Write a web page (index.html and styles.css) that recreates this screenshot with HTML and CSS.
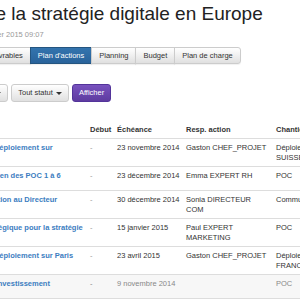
FILE: index.html
```html
<!DOCTYPE html>
<html>
<head>
<meta charset="utf-8" />
<title>Plan d'actions</title>
	<link rel="stylesheet" href="styles.css">
</head>

<body>
	<div class="page">
		<h1 class="titre">Pilotage de la stratégie digitale en Europe</h1>
		<div class="maj">Mis à jour le lundi 12 janvier 2015 09:07</div>

		<div class="onglets">
			<a class="onglet">Tableau de bord</a>
			<a class="onglet">Livrables</a>
			<a class="onglet actif">Plan d'actions</a>
			<a class="onglet">Planning</a>
			<a class="onglet">Budget</a>
			<a class="onglet">Plan de charge</a>
		</div>

		<form class="filtres">
			<button type="button" class="btn">Toutes les échéances <span class="caret"></span></button>
			<button type="button" class="btn">Tout statut <span class="caret"></span></button>
			<button type="submit" class="btn btn-violet">Afficher</button>
		</form>

		<table class="actions">
			<colgroup>
				<col class="c-ref" />
				<col class="c-action" />
				<col class="c-debut" />
				<col class="c-echeance" />
				<col class="c-resp" />
				<col class="c-chantier" />
				<col class="c-outils" />
			</colgroup>
			<thead>
				<tr>
					<th>N°</th>
					<th>Action</th>
					<th>Début</th>
					<th>Échéance</th>
					<th>Resp. action</th>
					<th>Chantier</th>
					<th></th>
				</tr>
			</thead>
			<tbody>
				<tr>
					<td>A-01</td>
					<td><a class="lien" href="#">Plan de déploiement sur</a></td>
					<td class="tiret">-</td>
					<td class="date">23 novembre 2014</td>
					<td>Gaston CHEF_PROJET</td>
					<td>Déploiement SUISSE</td>
					<td><button class="btn-mini">Modifier</button></td>
				</tr>
				<tr>
					<td>A-02</td>
					<td><a class="lien" href="#">Pré-examen des POC 1 à 6</a></td>
					<td class="tiret">-</td>
					<td class="date">23 décembre 2014</td>
					<td>Emma EXPERT RH</td>
					<td>POC</td>
					<td><button class="btn-mini">Modifier</button></td>
				</tr>
				<tr>
					<td>A-03</td>
					<td><a class="lien" href="#">Présentation au Directeur</a></td>
					<td class="tiret">-</td>
					<td class="date">30 décembre 2014</td>
					<td>Sonia DIRECTEUR COM</td>
					<td>Communication</td>
					<td><button class="btn-mini">Modifier</button></td>
				</tr>
				<tr>
					<td>A-04</td>
					<td><a class="lien" href="#">Axe stratégique pour la stratégie</a></td>
					<td class="tiret">-</td>
					<td class="date">15 janvier 2015</td>
					<td>Paul EXPERT MARKETING</td>
					<td>POC</td>
					<td><button class="btn-mini">Modifier</button></td>
				</tr>
				<tr>
					<td>A-05</td>
					<td><a class="lien" href="#">Plan de déploiement sur Paris</a></td>
					<td class="tiret">-</td>
					<td class="date">23 avril 2015</td>
					<td>Gaston CHEF_PROJET</td>
					<td>Déploiement FRANCE</td>
					<td><button class="btn-mini">Modifier</button></td>
				</tr>
				<tr class="termine">
					<td>A-06</td>
					<td><a class="lien" href="#">Projet d'investissement</a></td>
					<td class="tiret">-</td>
					<td class="date">9 novembre 2014</td>
					<td></td>
					<td>POC</td>
					<td><button class="btn-mini">Modifier</button></td>
				</tr>
			</tbody>
		</table>
	</div>
</body>
</html>
```

FILE: styles.css
```css
html, body {
	overflow: hidden;
}
body {
	margin: 0;
	background: #fff;
	font: 7.5px/10px "Liberation Sans", Arial, sans-serif;
	color: #333;
}
.page {
	margin-left: -89px;
	width: 620px;
}
.titre {
	margin: 2px 0 4px;
	font-size: 19px; line-height: 24px; font-weight: normal;
	color: #222;
	white-space: nowrap;
}
.maj {
	color: #999;
	white-space: nowrap;
}

/* onglets */
.onglets {
	display: flex;
	margin: 7px 0 0 5px;
}
.onglet {
	display: block;
	height: 17px; box-sizing: border-box;
	padding: 0 7px; line-height: 15px;
	margin-left: -1px;
	border: 1px solid #ccc;
	background: linear-gradient(#fff, #e0e0e0);
	box-shadow: 0 1px 1px rgba(0,0,0,.06);
	color: #333;
	white-space: nowrap;
}
.onglet:first-child { margin-left: 0; border-radius: 3px 0 0 3px; }
.onglet:last-child { border-radius: 0 3px 3px 0; }
.onglet.actif {
	background: linear-gradient(#3374ae, #29639b);
	border-color: #245580;
	color: #fff;
}

/* filtres */
.filtres {
	display: flex; gap: 3px;
	margin: 20px 0 0 2px;
}
.btn {
	height: 18px; box-sizing: border-box;
	padding: 0 6px;
	border: 1px solid #ccc; border-radius: 3px;
	background: linear-gradient(#fff, #e0e0e0);
	font: inherit; color: #333;
	white-space: nowrap;
}
.caret {
	display: inline-block; width: 0; height: 0;
	margin-left: 1px; vertical-align: middle;
	border-top: 3px solid #333;
	border-left: 3px solid transparent;
	border-right: 3px solid transparent;
}
.btn-violet {
	background: linear-gradient(#7852be, #5e3ba0);
	border-color: #53349a;
	color: #fff;
}

/* tableau */
.actions {
	margin-top: 19px;
	width: 490px;
	border-collapse: collapse;
	table-layout: fixed;
}
.c-ref { width: 51px; }
.c-action { width: 124px; }
.c-debut { width: 27px; }
.c-echeance { width: 69px; }
.c-resp { width: 90px; }
.c-chantier { width: 64px; }
.c-outils { width: 65px; }
.actions th, .actions td {
	padding: 4px 4px 3px;
	text-align: left; vertical-align: top;
	border-bottom: 1px solid #ddd;
}
.actions th { font-weight: bold; }
.lien {
	color: #3b7dbf; font-weight: bold;
	text-decoration: none;
	white-space: nowrap;
}
.tiret { color: #999; }
.date { white-space: nowrap; }
.btn-mini {
	height: 16px; padding: 0 5px;
	border: 1px solid #ccc; border-radius: 2px;
	background: #fff; font: inherit;
}
.termine td { background: #f7f7f7; color: #888; }
```
